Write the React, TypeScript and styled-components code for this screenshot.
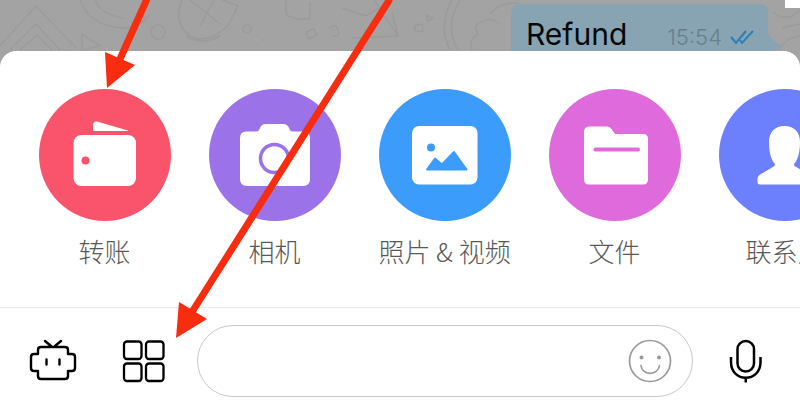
import React from "react";
import styled, { createGlobalStyle } from "styled-components";

const GlobalStyle = createGlobalStyle`
  * { box-sizing: border-box; }
  body {
    margin: 0;
    background: #a3a3a3;
    font-family: Inter, "Noto Sans CJK SC", sans-serif;
  }
  button { border: 0; padding: 0; background: none; font: inherit; cursor: pointer; }
  svg { display: block; }
`;

const Screen = styled.main`
  position: relative;
  display: flex;
  flex-direction: column;
  min-height: 100vh;
  overflow: hidden;
`;

const Chat = styled.section`
  position: relative;
  display: flex;
  justify-content: flex-end;
  height: 51px;
  padding: 4px 32px 0 0;
`;

const Doodles = styled.svg`
  position: absolute;
  top: 0;
  left: 0;
  fill: none;
  stroke: #9b9b9b;
  stroke-width: 1.5;
`;

const Corner = styled.div`
  position: absolute;
  top: 0;
  right: 0;
  width: 15px;
  height: 8px;
  background: #ffffff;
`;

const Bubble = styled.article`
  position: relative;
  display: flex;
  justify-content: space-between;
  width: 257px;
  height: 64px;
  padding: 10px 14px 0 15px;
  border-radius: 8px;
  background: #88a4b3;
`;

const Tail = styled.svg`
  position: absolute;
  top: 28px;
  left: 100%;
  fill: #88a4b3;
`;

const Message = styled.span`
  font-size: 30px;
  line-height: 40px;
  color: #05080b;
`;

const Meta = styled.span`
  display: flex;
  align-items: center;
  gap: 8px;
  height: 46px;
  font-size: 22px;
  font-weight: 300;
  color: #687f8b;
`;

const Sheet = styled.section`
  position: relative;
  flex: 1;
  display: flex;
  flex-direction: column;
  border-radius: 16px 16px 0 0;
  background: #ffffff;
`;

const Actions = styled.nav`
  display: flex;
  gap: 39px;
  padding: 38px 39px 40px;
  overflow-x: auto;
  scrollbar-width: none;
`;

const Action = styled.button`
  flex: none;
  display: flex;
  flex-direction: column;
  align-items: center;
  gap: 14px;
  width: 131px;
`;

const Disc = styled.span<{ $color: string }>`
  display: block;
  width: 132px;
  height: 132px;
  border-radius: 50%;
  background: ${(p) => p.$color};
  color: ${(p) => p.$color};
`;

const Label = styled.span`
  font-family: "Noto Sans CJK SC", sans-serif;
  font-size: 26px;
  font-weight: 300;
  line-height: 32px;
  white-space: nowrap;
  color: #585858;
`;

const Composer = styled.form`
  flex: 1;
  display: flex;
  align-items: center;
  padding: 0 29px 0 28px;
  border-top: 1px solid #e8e8e8;
`;

const Tool = styled.button`
  flex: none;
  color: #000000;
`;

const GridTool = styled(Tool)`
  margin: 0 32px 0 44px;
`;

const Field = styled.div`
  flex: 1;
  min-width: 0;
  display: flex;
  align-items: center;
  height: 72px;
  margin-right: 28px;
  padding: 0 20px 0 28px;
  border: 1px solid #c8c8c8;
  border-radius: 36px;
`;

const TextInput = styled.input`
  flex: 1;
  min-width: 0;
  border: 0;
  outline: 0;
  background: none;
  font: inherit;
  font-size: 26px;
`;

const Pointers = styled.svg`
  position: absolute;
  top: 0;
  left: 0;
  fill: #f82c0e;
  stroke: #f82c0e;
  pointer-events: none;
`;

const icons = {
  wallet: (
    <>
      <path d="M54 42V36Q54 32 58 32.5L89 41.5V42Z" fill="#fff" />
      <rect x="34.500" y="46" width="62.500" height="51" rx="8" fill="#fff" />
      <circle cx="46.500" cy="71.500" r="4" fill="currentColor" />
    </>
  ),
  camera: (
    <>
      <path d="M37 42.500H47Q50 42.500 51 39Q52.500 35 57 35H74Q78.500 35 80 39Q81 42.500 84 42.500H94Q101 42.500 101 49V90Q101 97 94 97H38Q31 97 31 90V49Q31 42.500 37 42.500Z" fill="#fff" />
      <circle cx="65.500" cy="69.500" r="14" fill="none" stroke="currentColor" strokeWidth="3.500" />
    </>
  ),
  photo: (
    <>
      <rect x="33" y="37" width="65.500" height="58.500" rx="7" fill="#fff" />
      <circle cx="52" cy="58.500" r="4" fill="currentColor" />
      <path d="M48 80.500L56 69.500L63 75.500L75 63L87.500 80.500Z" fill="currentColor" stroke="currentColor" strokeWidth="2" strokeLinejoin="round" />
    </>
  ),
  folder: (
    <>
      <path d="M41 37.500H58Q61 37.500 62.500 40L66 45H94Q99 45 99 50V90Q99 95.500 94 95.500H40Q35 95.500 35 90V43Q35 37.500 41 37.500Z" fill="#fff" />
      <path d="M46.500 60.500H89" stroke="currentColor" strokeWidth="4" strokeLinecap="round" />
    </>
  ),
  person: (
    <path d="M65.500 37C56 37 50 43 50 53C50 65 53 72 56 75L55.500 77L42 85Q38.500 87 38.500 90V93Q38.500 95.500 41 95.500H90Q92.500 95.500 92.500 93V90Q92.500 87 89 85L75.500 77L75 75C78 72 81 65 81 53C81 43 75 37 65.500 37Z" fill="#fff" />
  ),
};

const actions: { label: string; color: string; icon: keyof typeof icons }[] = [
  { label: "转账", color: "#fa536c", icon: "wallet" },
  { label: "相机", color: "#9b72e8", icon: "camera" },
  { label: "照片 & 视频", color: "#3c9cfc", icon: "photo" },
  { label: "文件", color: "#de6adc", icon: "folder" },
  { label: "联系人", color: "#6c7ffc", icon: "person" },
];

export default function App() {
  return (
    <Screen>
      <GlobalStyle />
      <Chat>
        <Doodles width="800" height="51" aria-hidden="true">
          <path d="M-4 50L36 6L76 48M10 50L36 24L60 50M20 50L37 35L52 50M80 0Q90 26 122 28Q140 28 150 14M94 0Q104 16 124 18M82 34L100 46L82 50Z" />
          <path d="M182 0Q174 18 184 30Q194 44 214 36L228 26L238 6L222 0M190 0L220 24M200 26L214 0M186 36Q202 46 220 36" />
          <circle cx="158" cy="32" r="7" />
          <circle cx="247" cy="29" r="4" />
          <path d="M262 40h3M286 0v14q10 8 24 4V2M306 32l8-3 3 6-8 4zM330 28q6-6 8 2t-6 6M342 8L366 16L392 0M352 38L398 36L392 12M374 0L398 36M414 26l8-2 1 7-7 1zM426 15l7 3-5 3z" />
          <path d="M452 0Q438 26 450 50M460 0Q444 26 458 50M472 50Q468 40 478 34Q472 24 482 22Q490 16 500 24M490 14Q502 0 520 4" />
          <path d="M774 12Q780 20 792 16L800 10M782 28L800 24M780 50Q784 38 800 36" />
        </Doodles>
        <Bubble>
          <Tail width="16" height="24" aria-hidden="true">
            <path d="M-1 0Q4 10 15 14Q8 20-1 20Z" />
          </Tail>
          <Message>Refund</Message>
          <Meta>
            15:54
            <svg width="24" height="16" viewBox="0 0 24 16" fill="none" stroke="#2f7fb2" strokeWidth="2" role="img" aria-label="已读">
              <path d="M1 8L6 14L16 2M10 11L12 14L23 2" />
            </svg>
          </Meta>
        </Bubble>
        <Corner />
      </Chat>
      <Sheet>
        <Actions>
          {actions.map((a) => (
            <Action key={a.label} type="button">
              <Disc $color={a.color}>
                <svg width="132" height="132" viewBox="0 0 132 132" aria-hidden="true">
                  {icons[a.icon]}
                </svg>
              </Disc>
              <Label>{a.label}</Label>
            </Action>
          ))}
        </Actions>
        <Composer onSubmit={(e) => e.preventDefault()}>
          <Tool type="button" aria-label="机器人">
            <svg width="50" height="44" viewBox="0 0 50 44" fill="none" stroke="currentColor" strokeWidth="2.400" strokeLinecap="round" strokeLinejoin="round">
              <path d="M13 8H37Q40 8 40 11V15H44Q47 15 47 18V29Q47 32 44 32H40V37Q40 40 37 40H13Q10 40 10 37V32H6Q3 32 3 29V18Q3 15 6 15H10V11Q10 8 13 8M17 2L23 7M33 2L27 7" />
              <path d="M18.500 20.500V25.500M31.500 20.500V25.500" />
            </svg>
          </Tool>
          <GridTool type="button" aria-label="更多功能">
            <svg width="43" height="43" viewBox="0 0 43 43" fill="none" stroke="currentColor" strokeWidth="2.300">
              <rect x="2" y="1.500" width="17.500" height="17.500" rx="3" />
              <rect x="24" y="1.500" width="17.500" height="17.500" rx="3" />
              <rect x="2" y="23.500" width="17.500" height="17.500" rx="3" />
              <rect x="24" y="23.500" width="17.500" height="17.500" rx="3" />
            </svg>
          </GridTool>
          <Field>
            <TextInput type="text" aria-label="消息" />
            <Tool type="button" aria-label="表情">
              <svg width="44" height="44" viewBox="0 0 44 44" fill="none" stroke="#999" strokeWidth="1.700" strokeLinecap="round">
                <circle cx="22" cy="22" r="20.500" />
                <path d="M13 26.500C14 37 30 37 31.500 26.500" />
                <circle cx="13.500" cy="18.500" r="2" fill="#999" stroke="none" />
                <circle cx="31" cy="18.500" r="2" fill="#999" stroke="none" />
              </svg>
            </Tool>
          </Field>
          <Tool type="button" aria-label="语音">
            <svg width="50" height="44" viewBox="0 0 50 44" fill="none" stroke="currentColor" strokeWidth="2.500">
              <rect x="16.500" y="2" width="16.500" height="30.500" rx="8.250" />
              <path d="M10 18V23C10 44 39.500 44 39.500 23V18M24.750 38V43.500" />
            </svg>
          </Tool>
        </Composer>
      </Sheet>
      <Pointers width="800" height="414" aria-hidden="true">
        <path d="M147 -1L120 59M390 -1L192 312" strokeWidth="7" />
        <path d="M107 88L105 52L135 65ZM176 338L179 302L207 319Z" stroke="none" />
      </Pointers>
    </Screen>
  );
}
